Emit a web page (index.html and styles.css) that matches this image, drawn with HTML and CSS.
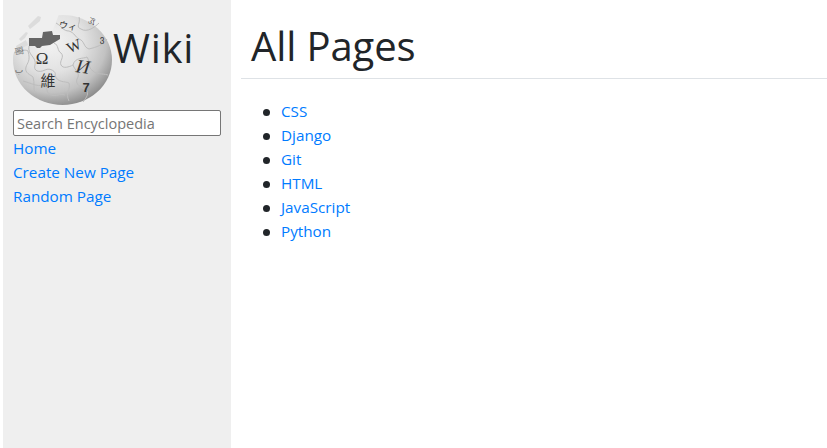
FILE: index.html
```html
<!DOCTYPE html>
<html lang="en">
<head>
<meta charset="utf-8">
<title>All Pages</title>
<link rel="stylesheet" href="styles.css">
</head>
<body>
<aside class="sidebar">
  <div class="brand">
    <svg class="globe" width="100" height="90" viewBox="0 0 100 90" aria-hidden="true">
      <defs>
        <radialGradient id="ball" cx="0.38" cy="0.3" r="0.75">
          <stop offset="0" stop-color="#f3f3f3"/>
          <stop offset="0.45" stop-color="#e2e2e2"/>
          <stop offset="0.75" stop-color="#c2c2c2"/>
          <stop offset="1" stop-color="#858585"/>
        </radialGradient>
      </defs>
      <ellipse cx="49.5" cy="45" rx="49.5" ry="45" fill="url(#ball)"/>
      <path class="gap" d="M-1 -1H46L43 7 41 12 39 16 30 17 29 23 16 23 14 28 6 31 1 37 -1 40Z"/>
      <path class="shard" d="M15 11L25 1 28 2 27 6 21 11 17 14Z"/>
      <path class="shard" d="M6 24L13 17 15 18 12 23 8 26Z"/>
      <path class="shard" d="M3 31L13 25 15 30 4 36Z"/>
      <path class="dark" d="M16 23L29 23 30 17 39 16 40 20 47 20 47 24 42 27 37 30 29 31 27 33 24 33 22 31 16 31Z"/>
      <g class="seams" fill="none">
        <path d="M1 38C6 36 12 34 15 36 18 46 14 48 13 52 11 58 18 60 20 62 22 68 20 74 22 78"/>
        <path d="M16 31C14 40 24 42 22 50 20 56 26 58 32 55 38 52 44 58 42 60 44 68 52 66 56 68 58 74 52 78 56 86"/>
        <path d="M41 28C46 30 44 36 48 38 52 42 46 46 48 50 50 54 56 52 60 50 62 42 70 44 74 42"/>
        <path d="M43 8C50 12 50 16 56 16 62 18 62 22 66 24 72 26 70 32 76 34 84 32 90 30 94 24"/>
        <path d="M66 2C68 8 62 12 68 14 74 18 82 12 86 8"/>
        <path d="M74 42C78 48 74 52 80 56 84 60 88 58 95 60"/>
        <path d="M60 50C62 56 68 58 64 64 62 70 68 72 74 76 76 80 72 84 70 87"/>
        <path d="M10 66C18 68 24 72 30 70 36 72 32 78 38 80 44 82 46 78 52 80"/>
      </g>
      <g class="glyphs" text-anchor="middle">
        <text x="29" y="49" class="g-omega">Ω</text>
        <text x="61" y="36" class="g-w" transform="rotate(-24 61 31)">W</text>
        <text x="70" y="58" class="g-i" transform="rotate(8 70 52)">И</text>
        <text x="35" y="71" class="g-cjk">維</text>
        <text x="73" y="77" class="g-seven">7</text>
        <text x="55" y="14" class="g-small" transform="rotate(10 55 11)">ウィ</text>
        <text x="78" y="10" class="g-small">ঐ</text>
        <text x="89" y="27" class="g-small">ვ</text>
        <text x="6" y="39" class="g-small g-faint" transform="rotate(80 6 36)">窗</text>
        <text x="6" y="58" class="g-small g-faint">ب</text>
      </g>
    </svg>
    <span class="brand-name">Wiki</span>
  </div>
  <form class="search">
    <input class="search-input" type="text" placeholder="Search Encyclopedia">
  </form>
  <nav class="side-nav">
    <a href="#">Home</a>
    <a href="#">Create New Page</a>
    <a href="#">Random Page</a>
  </nav>
</aside>
<main class="content">
  <h1 class="title">All Pages</h1>
  <ul class="pages">
    <li><a href="#">CSS</a></li>
    <li><a href="#">Django</a></li>
    <li><a href="#">Git</a></li>
    <li><a href="#">HTML</a></li>
    <li><a href="#">JavaScript</a></li>
    <li><a href="#">Python</a></li>
  </ul>
</main>
</body>
</html>
```

FILE: styles.css
```css
* { box-sizing: border-box; }

html, body { height: 100%; }

body {
  margin: 0;
  padding-left: 3px;
  display: flex;
  overflow: hidden;
  background: #fff;
  color: #212529;
  font-family: "Open Sans", "Noto Sans", sans-serif;
  font-size: 16px;
  line-height: 24px;
}

a { color: #007bff; text-decoration: none; }

.sidebar {
  flex: 0 0 228px;
  background: #efefef;
  padding: 15px 10px 0;
}

.brand {
  display: flex;
  align-items: flex-start;
  height: 90px;
}

.globe { flex: none; overflow: hidden; }

.gap { fill: #efefef; }
.shard { fill: #dcdcdc; }
.dark { fill: #666; }
.seams { stroke: #bdbdbd; stroke-width: 1; }
.glyphs { fill: #333; }

.brand-name {
  margin: 9px 0 0;
  font-size: 40px;
  line-height: 48px;
  font-weight: 500;
  letter-spacing: 0.7px;
}

.search { margin-top: 5px; }

.search-input {
  display: block;
  width: 208px;
  height: 26px;
  padding: 1px 3px;
  border: 1px solid #767676;
  border-radius: 2px;
  background: #fff;
  font: inherit;
  font-size: 14.5px;
}

.search-input::placeholder { color: #757575; opacity: 1; }

.side-nav { display: flex; flex-direction: column; align-items: flex-start; }
.side-nav a { font-size: 15.25px; }

.content { flex: 1; margin-left: 10px; min-width: 0; }

.title {
  margin: 0;
  height: 79px;
  padding: 22px 10px 0;
  border-bottom: 1px solid #dee2e6;
  font-size: 40px;
  line-height: 48px;
  font-weight: 500;
  letter-spacing: -0.1px;
}

.pages {
  margin: 20px 0 0;
  padding-left: 22px;
  list-style: none;
}

.pages li { display: flex; align-items: center; gap: 11px; }

.pages li::before {
  content: "";
  width: 7px;
  height: 7px;
  margin-top: 2px;
  border-radius: 50%;
  background: #212529;
}

.pages a { font-size: 15.25px; }

.g-omega { font: 17px "Liberation Serif", serif; }
.g-w { font: 15px "Liberation Serif", serif; }
.g-i { font: italic 19px "Liberation Serif", serif; }
.g-cjk { font: 15px "Noto Sans CJK TC", sans-serif; }
.g-seven { font: bold 13px "Liberation Sans", sans-serif; }
.g-small { font: 9px "DejaVu Sans", "Noto Sans CJK JP", sans-serif; }
.g-faint { opacity: 0.6; }
```
